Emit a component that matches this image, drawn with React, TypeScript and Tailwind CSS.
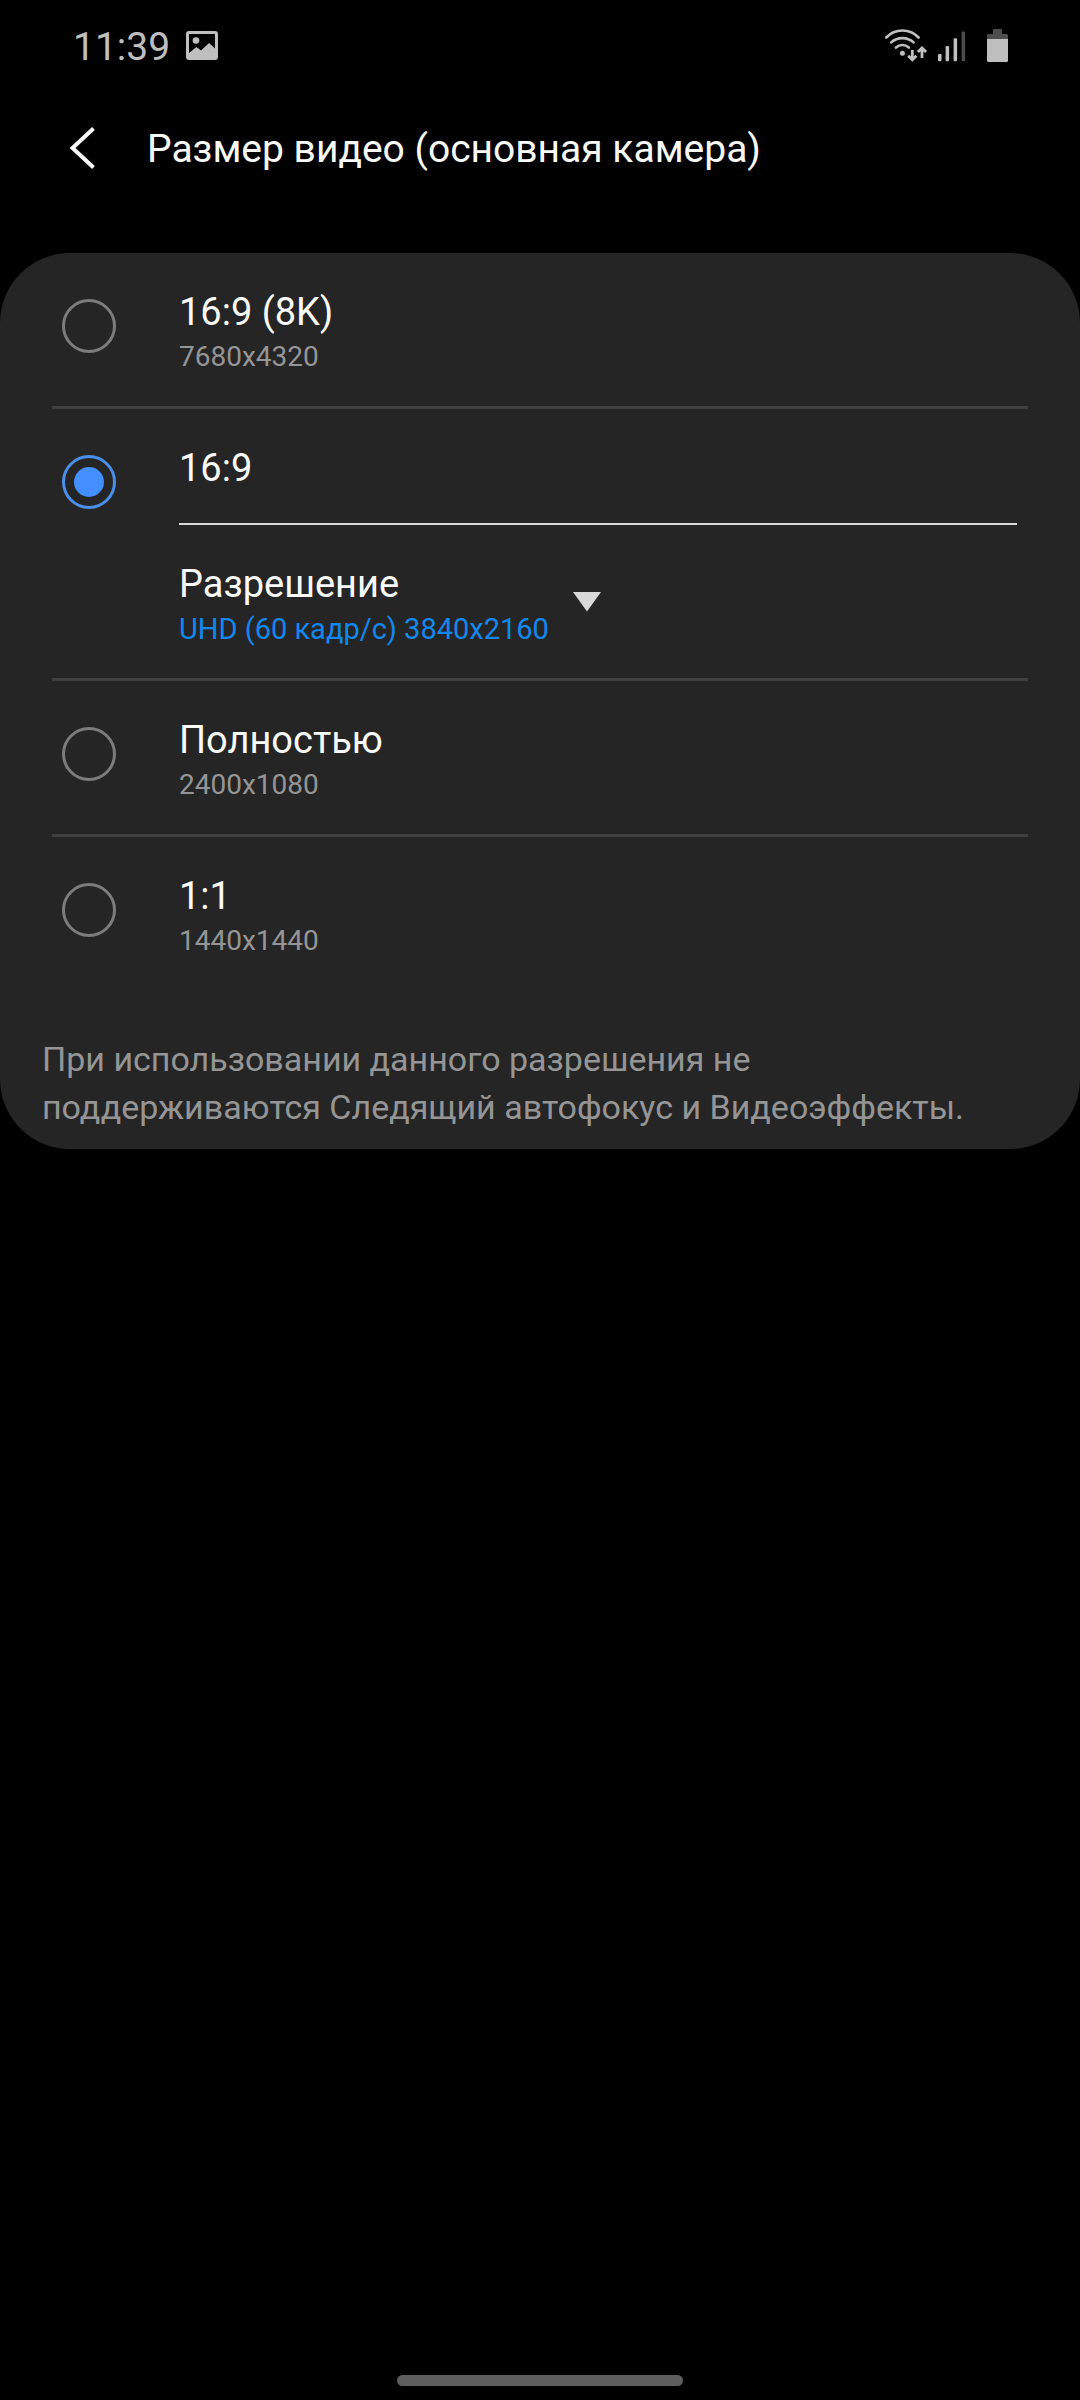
import { useState } from "react";
import type { ReactNode } from "react";

const options = [
  { id: "8k", title: "16:9 (8K)", size: "7680x4320" },
  { id: "wide", title: "16:9", resolution: "UHD (60 кадр/с) 3840x2160" },
  { id: "full", title: "Полностью", size: "2400x1080" },
  { id: "square", title: "1:1", size: "1440x1440" },
];

function StatusBar() {
  return (
    <div className="flex items-center justify-between pt-[23px] pr-[70px] pl-[73px] text-[#bfbfbf]">
      <div className="flex items-center gap-4">
        <span className="text-[39px] leading-[48px]">11:39</span>
        <svg width="32" height="32" viewBox="0 0 32 32" aria-hidden="true">
          <path
            fill="currentColor"
            fillRule="evenodd"
            d="M3 0h26a3 3 0 0 1 3 3v23a3 3 0 0 1-3 3H3a3 3 0 0 1-3-3V3a3 3 0 0 1 3-3ZM3 3v19l7.500-6 4.500 3.500 8-7.500 6 5.500V3Z"
          />
          <circle cx="10" cy="9.500" r="3.300" fill="currentColor" />
        </svg>
      </div>

      <div className="flex items-center">
        <svg width="44" height="38" viewBox="0 0 44 38" fill="none" stroke="currentColor" aria-hidden="true">
          <g strokeWidth="2.600" strokeLinecap="round">
            <path d="M2.200 9.500A22.400 22.400 0 0 1 34.600 9.500" />
            <path d="M7.200 14.400A16.800 16.800 0 0 1 29.600 14.400" />
            <path d="M12 19.500A9.500 9.500 0 0 1 24.800 19.500" />
          </g>
          <circle cx="18.400" cy="25.300" r="2.500" fill="currentColor" stroke="none" />
          <path strokeWidth="2.800" d="M28.300 22v9.500M24.200 27.800l4.100 4 4.100-4M38 30v-9.500M33.900 23.900l4.100-4 4.100 4" />
        </svg>
        <svg width="30" height="38" viewBox="0 0 30 38" fill="currentColor" className="ml-2" aria-hidden="true">
          <rect x="2" y="26" width="3.500" height="7.300" rx="1.200" />
          <rect x="9.600" y="18" width="3.500" height="15.300" rx="1.200" />
          <rect x="17.600" y="10.300" width="3.500" height="23" rx="1.200" />
          <rect x="25.600" y="3.600" width="3.500" height="29.700" rx="1.200" fill="#4d4d4d" />
        </svg>
        <svg width="24" height="38" viewBox="0 0 24 38" className="ml-5" aria-hidden="true">
          <path fill="#4d4d4d" d="M8 1h7a1 1 0 0 1 1 1v4h4.500A1.500 1.500 0 0 1 22 7.500V12H1V7.500A1.500 1.500 0 0 1 2.500 6H7V2a1 1 0 0 1 1-1Z" />
          <path fill="currentColor" d="M1 11h21v21.500a1.500 1.500 0 0 1-1.500 1.500h-18A1.500 1.500 0 0 1 1 32.500Z" />
        </svg>
      </div>
    </div>
  );
}

function Header() {
  return (
    <header className="flex items-center pt-[54px] pl-[68px] text-[#fafafa]">
      <button type="button" aria-label="Назад" className="mr-[51px]">
        <svg width="28" height="46" viewBox="0 0 28 46" fill="none" stroke="currentColor" strokeWidth="4">
          <path d="M25.500 2.500L4.500 22l21 19.500" />
        </svg>
      </button>
      <h1 className="text-[39px] leading-[48px]">Размер видео (основная камера)</h1>
    </header>
  );
}

function Divider() {
  return <div className="mx-[52px] h-[3px] bg-[#404040]" />;
}

function Resolution({ value }: { value: string }) {
  return (
    <div className="flex items-center border-t-2 border-[#d9d9d9]">
      <div className="flex flex-col items-start pt-[35px] pb-7">
        <label htmlFor="resolution" className="text-[38px] leading-[48px]">
          Разрешение
        </label>
        <select
          id="resolution"
          className="h-[42px] appearance-none bg-transparent p-0 text-[29px] leading-[42px] text-[#1288ee] outline-none"
        >
          <option>{value}</option>
        </select>
      </div>
      <svg width="28" height="20" viewBox="0 0 28 20" className="pointer-events-none ml-6" aria-hidden="true">
        <path fill="#d9d9d9" d="M0 0h28L14 19.500Z" />
      </svg>
    </div>
  );
}

type OptionRowProps = {
  id: string;
  title: string;
  size?: string;
  checked: boolean;
  onSelect: () => void;
  children?: ReactNode;
};

function OptionRow({ id, title, size, checked, onSelect, children }: OptionRowProps) {
  return (
    <div className="flex items-start pr-[63px] pl-[62px]">
      <input
        type="radio"
        name="video-size"
        id={id}
        checked={checked}
        onChange={onSelect}
        className="mt-[46px] mr-[63px] size-[54px] shrink-0 appearance-none rounded-full border-[3px] border-[#7c7c7c] bg-clip-content p-[9px] checked:border-[#4a8fea] checked:bg-[#438fff]"
      />
      <div className="grow">
        <label htmlFor={id} className={size ? "block pt-[35px] pb-7" : "block pt-[35px] pb-[31px]"}>
          <span className="block text-[38px] leading-[48px]">{title}</span>
          {size && <span className="block text-[28px] leading-[42px] text-[#959595]">{size}</span>}
        </label>
        {children}
      </div>
    </div>
  );
}

export default function App() {
  const [selected, setSelected] = useState("wide");

  return (
    <div className="flex min-h-screen flex-col bg-black font-['Roboto',sans-serif]">
      <StatusBar />
      <Header />

      <main className="mt-20 rounded-[70px] bg-[#252525] text-[#fafafa]">
        {options.map((option, i) => (
          <div key={option.id}>
            {i > 0 && <Divider />}
            <OptionRow
              id={option.id}
              title={option.title}
              size={option.size}
              checked={selected === option.id}
              onSelect={() => setSelected(option.id)}
            >
              {option.resolution && <Resolution value={option.resolution} />}
            </OptionRow>
          </div>
        ))}

        <p className="pt-[45px] pr-[63px] pb-[18px] pl-[42px] text-[34px] leading-[48px] text-[#959595]">
          При использовании данного разрешения не поддерживаются Следящий автофокус и Видеоэффекты.
        </p>
      </main>

      <div className="mx-auto mt-auto mb-3.5 h-[11px] w-[286px] rounded-full bg-[#5e5e5e]" />
    </div>
  );
}
